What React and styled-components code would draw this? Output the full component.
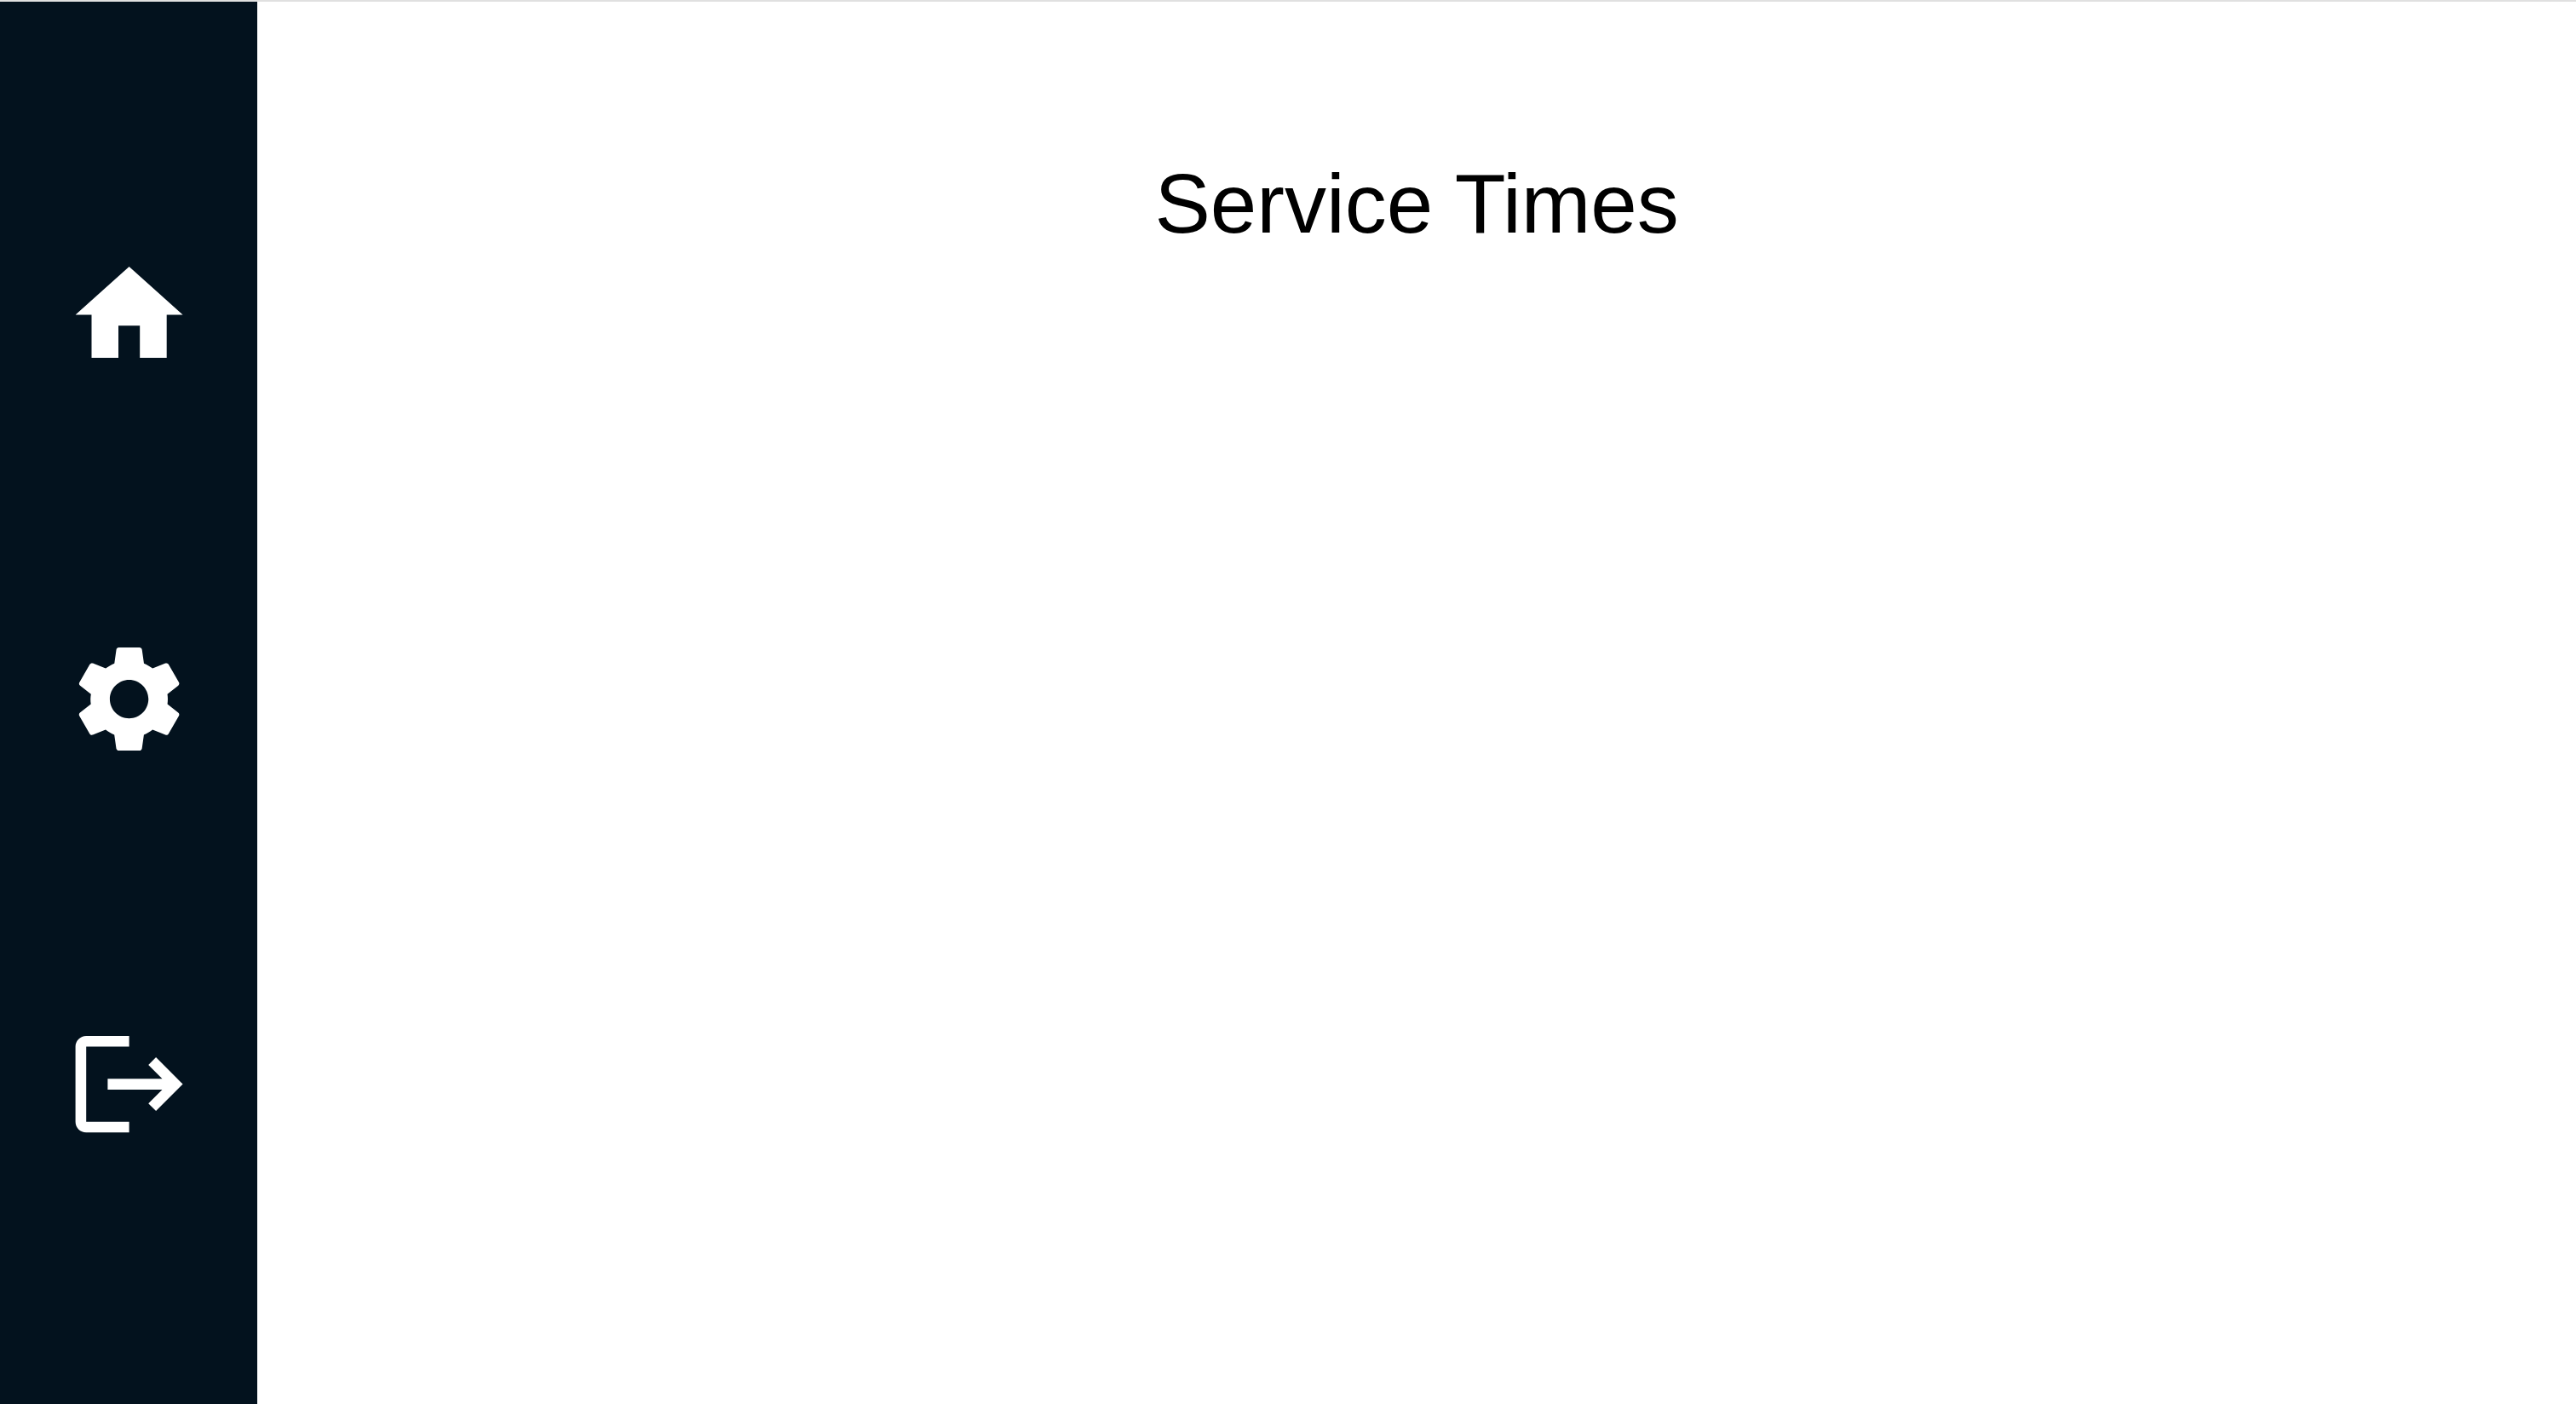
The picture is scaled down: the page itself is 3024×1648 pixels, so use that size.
import React from "react";
import styled, { createGlobalStyle } from "styled-components";

const GlobalStyle = createGlobalStyle`
  * { box-sizing: border-box; }
  body { margin: 0; background: #ffffff; }
`;

const Page = styled.div`
  display: flex;
  min-height: 100vh;
  border-top: 2px solid #e0e0e0;
  font-family: "Liberation Sans", Helvetica, Arial, sans-serif;
  color: #000000;
`;

const Sidebar = styled.nav`
  flex: 0 0 10%;
  display: flex;
  flex-direction: column;
  align-items: center;
  justify-content: space-evenly;
  background: #03121e;
`;

const NavButton = styled.button`
  display: block;
  width: 50%;
  padding: 0 0 8px;
  border: 0;
  background: none;
  color: #ffffff;
  cursor: pointer;
`;

const Icon = styled.svg`
  display: block;
  width: 100%;
  aspect-ratio: 1;
  fill: currentColor;
`;

const Main = styled.main`
  flex: 1;
  padding-top: 181px;
`;

const Title = styled.h1`
  margin: 0;
  font-size: 98px;
  line-height: 112px;
  font-weight: 400;
  text-align: center;
`;

const items = [
  { label: "Home", path: "M10 20v-6h4v6h5v-8h3L12 3 2 12h3v8z" },
  {
    label: "Settings",
    path: "M19.14 12.94c.04-.3.06-.61.06-.94 0-.32-.02-.64-.07-.94l2.03-1.58c.18-.14.23-.41.12-.61l-1.92-3.32c-.12-.22-.37-.29-.59-.22l-2.39.96c-.5-.38-1.03-.7-1.62-.94l-.36-2.54c-.04-.24-.24-.41-.48-.41h-3.84c-.24 0-.43.17-.47.41l-.36 2.54c-.59.24-1.13.57-1.62.94l-2.39-.96c-.22-.08-.47 0-.59.22L2.74 8.87c-.12.21-.08.47.12.61l2.03 1.58c-.05.3-.09.63-.09.94s.02.64.07.94l-2.03 1.58c-.18.14-.23.41-.12.61l1.92 3.32c.12.22.37.29.59.22l2.39-.96c.5.38 1.03.7 1.62.94l.36 2.54c.05.24.24.41.48.41h3.84c.24 0 .44-.17.47-.41l.36-2.54c.59-.24 1.13-.56 1.62-.94l2.39.96c.22.08.47 0 .59-.22l1.92-3.32c.12-.22.07-.47-.12-.61zM12 15.6c-1.98 0-3.6-1.62-3.6-3.6s1.62-3.6 3.6-3.6 3.6 1.62 3.6 3.6-1.62 3.6-3.6 3.6",
  },
  {
    label: "Log out",
    path: "m17 7-1.41 1.41L18.17 11H8v2h10.17l-2.58 2.58L17 17l5-5zM4 5h8V3H4c-1.1 0-2 .9-2 2v14c0 1.1.9 2 2 2h8v-2H4z",
  },
];

export default function App() {
  return (
    <>
      <GlobalStyle />
      <Page>
        <Sidebar aria-label="Main">
          {items.map(({ label, path }) => (
            <NavButton key={label} type="button" aria-label={label}>
              <Icon viewBox="0 0 24 24" aria-hidden="true">
                <path d={path} />
              </Icon>
            </NavButton>
          ))}
        </Sidebar>
        <Main>
          <Title>Service Times</Title>
        </Main>
      </Page>
    </>
  );
}
